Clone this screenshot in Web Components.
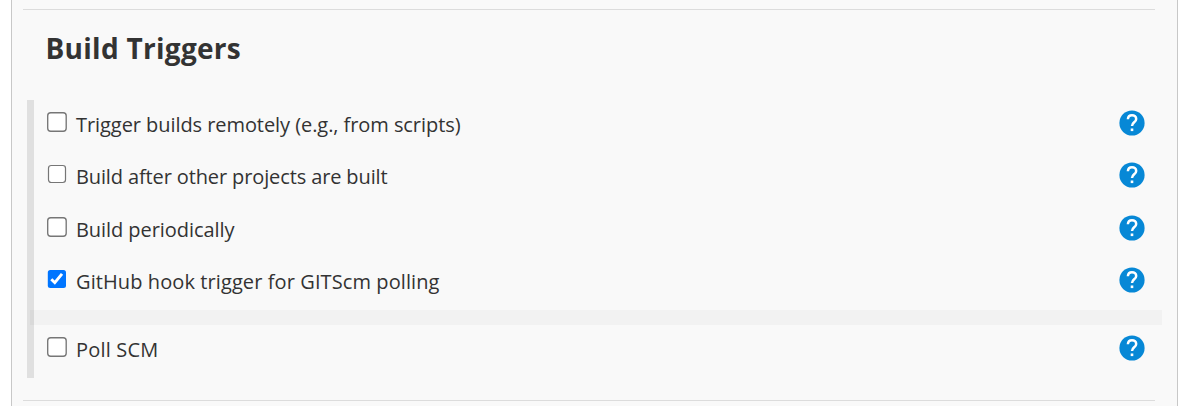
<!DOCTYPE html>
<html lang="en">
<head>
<meta charset="utf-8">
<title>Build Triggers</title>
<style>
html, body { margin: 0; height: 406px; overflow: hidden; background: #fff; }
body { font-family: "Open Sans", "Noto Sans", sans-serif; color: #333; }
</style>
</head>
<body>
<config-panel>
  <section-heading><fit-text width="195">Build Triggers</fit-text></section-heading>
  <trigger-list>
    <trigger-row style="height:52px"><fit-text width="384">Trigger builds remotely (e.g., from scripts)</fit-text></trigger-row>
    <trigger-row small style="height:53px"><fit-text width="311">Build after other projects are built</fit-text></trigger-row>
    <trigger-row style="height:52px"><fit-text width="158">Build periodically</fit-text></trigger-row>
    <trigger-row checked style="height:53px"><fit-text width="363">GitHub hook trigger for GITScm polling</fit-text></trigger-row>
    <nested-band></nested-band>
    <trigger-row style="height:53px"><fit-text width="82">Poll SCM</fit-text></trigger-row>
  </trigger-list>
</config-panel>
<script>
class Base extends HTMLElement {
  constructor() { super(); this.attachShadow({ mode: 'open' }).innerHTML = this.view(); }
}
customElements.define('config-panel', class extends Base {
  view() { return `<style>
    :host { display: flex; flex-direction: column; box-sizing: border-box; height: 406px; margin: 0 2px 0 11px; padding-top: 9px; border: solid #c8c8c8; border-width: 0 1px; background: #f9f9f9; }
    .rule { flex: none; height: 1px; margin: 0 22px 0 11px; background: #dcdcdc; }
    .body { height: 390px; flex: none; }
  </style><div class="rule"></div><div class="body"><slot></slot></div><div class="rule"></div>`; }
});
customElements.define('section-heading', class extends Base {
  view() { return `<style>
    :host { display: block; height: 90px; box-sizing: border-box; padding: 18px 0 0 33.5px; }
    h2 { margin: 0; font-size: 28px; line-height: 40px; font-weight: 700; }
  </style><h2><slot></slot></h2>`; }
});
customElements.define('trigger-list', class extends Base {
  view() { return `<style>
    :host { display: flex; flex-direction: column; box-sizing: border-box; height: 278px; margin: 0 15px; border-left: 7px solid #e0e0e0; }
  </style><slot></slot>`; }
});
customElements.define('nested-band', class extends Base {
  view() { return `<style>:host { display: block; height: 15px; margin-left: -4px; background: rgba(0,0,0,.027); }</style>`; }
});
customElements.define('help-icon', class extends Base {
  view() { return `<style>:host { display: block; width: 26px; height: 26px; } svg { display: block; }</style>
    <svg width="26" height="26" viewBox="0 0 26 26"><circle cx="13" cy="13" r="12.6" fill="#0788d6"/><path d="M8.9 9.2C9 6.7 10.7 5.2 13 5.2c2.4 0 4.2 1.5 4.2 3.7 0 3.3-4.2 3.5-4.2 7" fill="none" stroke="#fff" stroke-width="2.5"/><rect x="11.7" y="18.5" width="2.6" height="2.6" fill="#fff"/></svg>`; }
});
customElements.define('check-box', class extends Base {
  view() {
    return `<style>:host { display: block; width: 20px; height: 20px; } svg { display: block; }</style><div></div>`;
  }
  connectedCallback() {
    const s = this.getAttribute('kind');
    const box = s === 'checked'
      ? '<rect x=".8" y="1" width="18.2" height="18" rx="2.5" fill="#0075ff"/><path d="M4.3 10.2l3.5 3.5 7.2-8.9" fill="none" stroke="#fff" stroke-width="2.9"/>'
      : s === 'small'
      ? '<rect x="1.5" y="1.5" width="17" height="17" rx="2.7" fill="#fff" stroke="#767676" stroke-width="1.2"/>'
      : '<rect x=".7" y=".7" width="18.5" height="18.5" rx="3" fill="#fff" stroke="#767676" stroke-width="1.35"/>';
    this.shadowRoot.querySelector('div').innerHTML = `<svg width="20" height="20" viewBox="0 0 20 20">${box}</svg>`;
  }
});
customElements.define('trigger-row', class extends Base {
  view() {
    const kind = this.hasAttribute('checked') ? 'checked' : this.hasAttribute('small') ? 'small' : 'normal';
    return `<style>
    :host { display: flex; flex: none; align-items: flex-start; box-sizing: border-box; padding: 10px 17px 0 13px; }
    check-box { margin-top: 2px; }
    label { flex: 1; margin-left: 9px; font-size: 20px; line-height: 30px; font-weight: 370; white-space: nowrap; }
  </style><check-box kind="${kind}"></check-box><label><slot></slot></label><help-icon></help-icon>`; }
});
/* Spreads its text to the requested width by letter spacing. */
customElements.define('fit-text', class extends Base {
  view() { return `<style>:host { display: inline-block; white-space: nowrap; }</style><slot></slot>`; }
  connectedCallback() {
    const extra = +this.getAttribute('width') + 0.5 - this.getBoundingClientRect().width;
    this.style.letterSpacing = extra / this.textContent.length + 'px';
  }
});
</script>
</body>
</html>
